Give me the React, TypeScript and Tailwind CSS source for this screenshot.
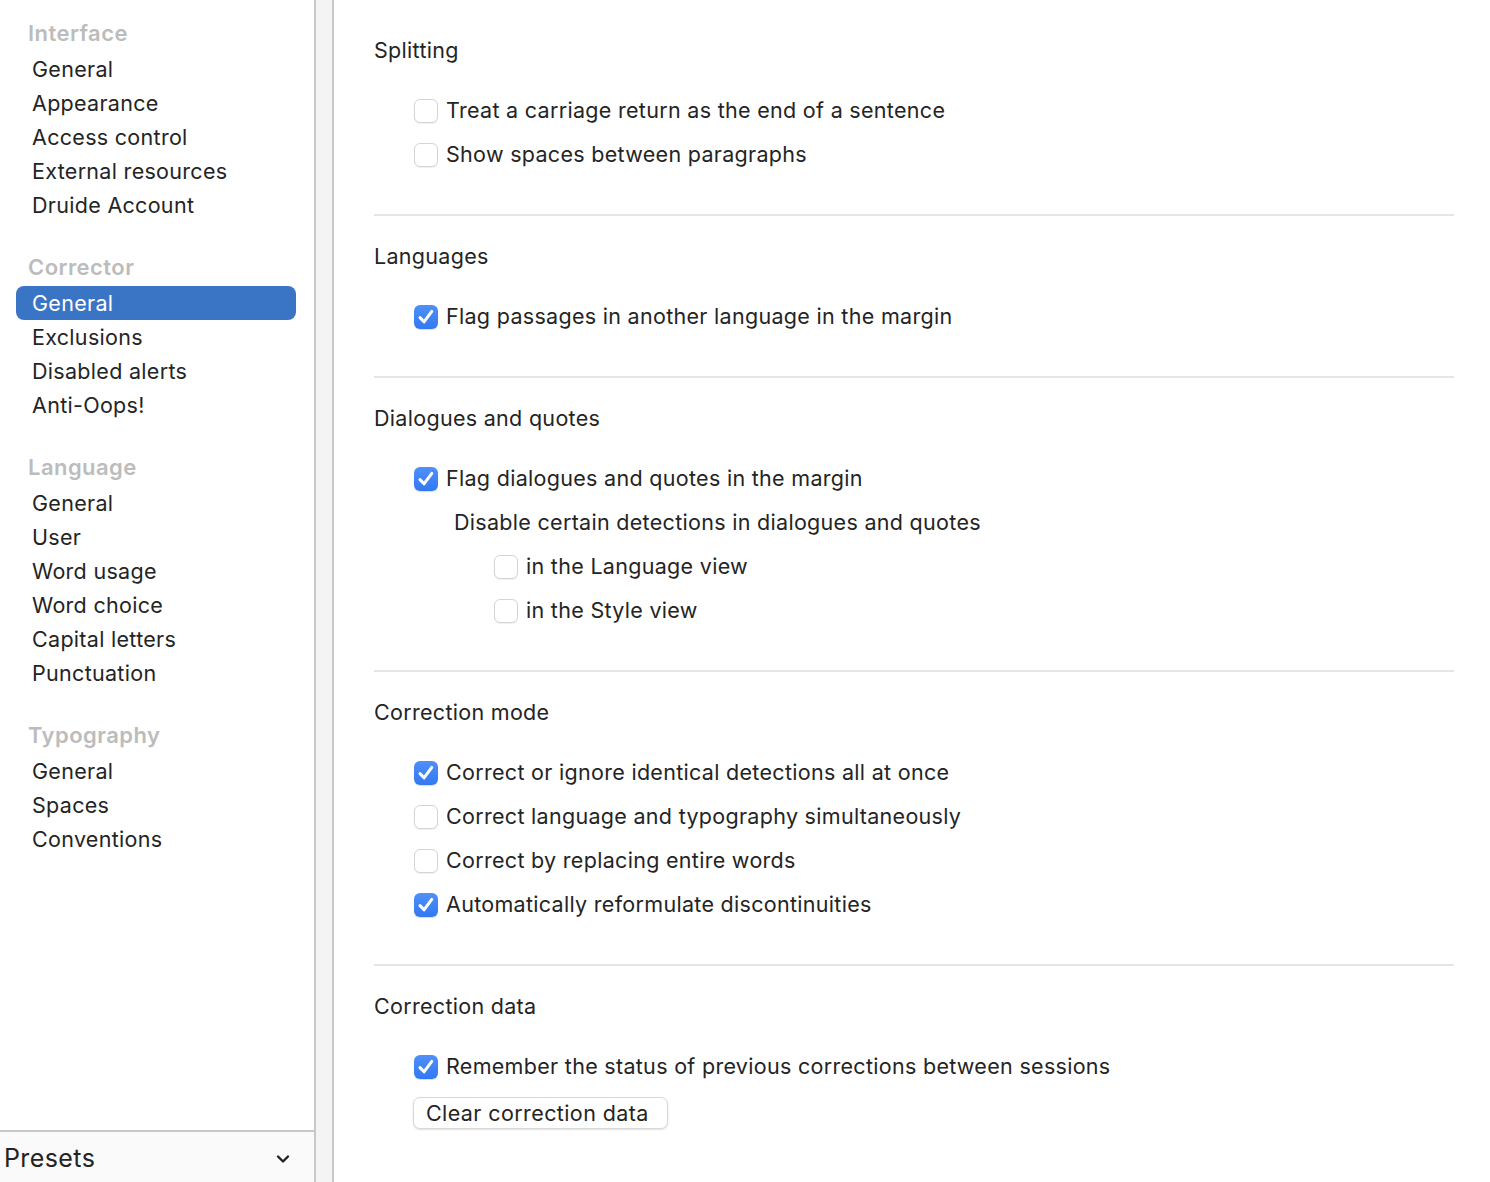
import React from "react";

const font = { fontFamily: "Inter, 'Noto Sans', sans-serif" };

function Checkbox({ checked }: { checked: boolean }) {
  if (checked) {
    return (
      <div className="w-[24px] h-[24px] rounded-[6px] bg-gradient-to-b from-[#4f90f9] to-[#3178f2] flex items-center justify-center shrink-0 shadow-[0_1px_1px_rgba(0,0,0,0.15)]">
        <svg width="20" height="20" viewBox="0 0 20 20" fill="none">
          <path d="M4 10.6 L8 14.8 L15.8 4.4" stroke="white" strokeWidth="3" strokeLinecap="round" strokeLinejoin="round" />
        </svg>
      </div>
    );
  }
  return (
    <div className="w-[24px] h-[24px] rounded-[6px] bg-white border border-[#d4d4d4] shrink-0 shadow-[0_1px_1px_rgba(0,0,0,0.06)]" />
  );
}

function Row({ checked, label, indent = 0 }: { checked: boolean; label: string; indent?: number }) {
  return (
    <div className={`flex items-center h-[44px] gap-[8px] ${indent === 1 ? "pl-[120px]" : "pl-[40px]"}`}>
      <Checkbox checked={checked} />
      <span className="text-[21.5px] text-[#242424] leading-none tracking-[0.3px]">{label}</span>
    </div>
  );
}

function Heading({ children }: { children: React.ReactNode }) {
  return <div className="h-[36px] flex items-center text-[21.5px] text-[#242424] tracking-[0.3px]">{children}</div>;
}

function Sep() {
  return <div className="h-[2px] bg-[#e5e5e5] w-full" />;
}

function SideHeading({ children }: { children: React.ReactNode }) {
  return <div className="h-[36px] flex items-center pl-[28px] pb-[2px] text-[22px] font-semibold text-[#bcbcbc] tracking-[0.45px]">{children}</div>;
}

function SideItem({ children, selected = false }: { children: React.ReactNode; selected?: boolean }) {
  if (selected) {
    return (
      <div className="ml-[16px] mr-[18px] h-[34px] rounded-[8px] bg-[#3a74c5] flex items-center pl-[16px] text-[21.5px] text-white tracking-[0.3px]">
        {children}
      </div>
    );
  }
  return <div className="h-[34px] flex items-center pl-[32px] text-[21.5px] text-[#242424] tracking-[0.3px]">{children}</div>;
}

export default function App() {
  return (
    <div className="w-[1490px] h-[1182px] flex bg-white overflow-hidden" style={font}>
      {/* Sidebar */}
      <div className="w-[314px] h-full flex flex-col bg-white shrink-0">
        <div className="flex-1 pt-[16px]">
          <SideHeading>Interface</SideHeading>
          <SideItem>General</SideItem>
          <SideItem>Appearance</SideItem>
          <SideItem>Access control</SideItem>
          <SideItem>External resources</SideItem>
          <SideItem>Druide Account</SideItem>
          <div className="h-[28px]" />
          <SideHeading>Corrector</SideHeading>
          <SideItem selected>General</SideItem>
          <SideItem>Exclusions</SideItem>
          <SideItem>Disabled alerts</SideItem>
          <SideItem>Anti-Oops!</SideItem>
          <div className="h-[28px]" />
          <SideHeading>Language</SideHeading>
          <SideItem>General</SideItem>
          <SideItem>User</SideItem>
          <SideItem>Word usage</SideItem>
          <SideItem>Word choice</SideItem>
          <SideItem>Capital letters</SideItem>
          <SideItem>Punctuation</SideItem>
          <div className="h-[28px]" />
          <SideHeading>Typography</SideHeading>
          <SideItem>General</SideItem>
          <SideItem>Spaces</SideItem>
          <SideItem>Conventions</SideItem>
        </div>
        <div className="h-[52px] border-t-2 border-[#c8c8c8] bg-[#fafafa] flex items-center justify-between pl-[4px] pr-[24px] pt-[3px]">
          <span className="text-[25px] text-[#242424] tracking-[0.4px]">Presets</span>
          <svg width="14" height="10" viewBox="0 0 14 10" fill="none">
            <path d="M2 2.5 L7 7.5 L12 2.5" stroke="#222" strokeWidth="2.4" strokeLinecap="round" strokeLinejoin="round" />
          </svg>
        </div>
      </div>
      {/* Divider */}
      <div className="w-[20px] h-full bg-[#f4f4f4] border-x-2 border-[#c8c8c8] shrink-0" />
      {/* Content */}
      <div className="flex-1 pl-[40px] pr-[36px] pt-[32px]">
        <Heading>Splitting</Heading>
        <div className="h-[21px]" />
        <Row checked={false} label="Treat a carriage return as the end of a sentence" />
        <Row checked={false} label="Show spaces between paragraphs" />
        <div className="h-[37px]" />
        <Sep />

        <div className="h-[22px]" />
        <Heading>Languages</Heading>
        <div className="h-[21px]" />
        <Row checked label="Flag passages in another language in the margin" />
        <div className="h-[37px]" />
        <Sep />

        <div className="h-[22px]" />
        <Heading>Dialogues and quotes</Heading>
        <div className="h-[21px]" />
        <Row checked label="Flag dialogues and quotes in the margin" />
        <div className="h-[44px] flex items-center pl-[80px] pb-[2px] text-[21.5px] text-[#242424] tracking-[0.3px]">
          Disable certain detections in dialogues and quotes
        </div>
        <Row checked={false} indent={1} label="in the Language view" />
        <Row checked={false} indent={1} label="in the Style view" />
        <div className="h-[37px]" />
        <Sep />

        <div className="h-[22px]" />
        <Heading>Correction mode</Heading>
        <div className="h-[21px]" />
        <Row checked label="Correct or ignore identical detections all at once" />
        <Row checked={false} label="Correct language and typography simultaneously" />
        <Row checked={false} label="Correct by replacing entire words" />
        <Row checked label="Automatically reformulate discontinuities" />
        <div className="h-[37px]" />
        <Sep />

        <div className="h-[22px]" />
        <Heading>Correction data</Heading>
        <div className="h-[21px]" />
        <Row checked label="Remember the status of previous corrections between sessions" />
        <div className="pl-[39px] pt-[8px]">
          <div className="inline-flex items-center w-[255px] h-[32px] px-[12px] rounded-[7px] bg-white border border-[#d8d8d8] shadow-[0_1px_2px_rgba(0,0,0,0.12)] text-[21.5px] text-[#242424] tracking-[0.4px]">
            Clear correction data
          </div>
        </div>
      </div>
    </div>
  );
}
